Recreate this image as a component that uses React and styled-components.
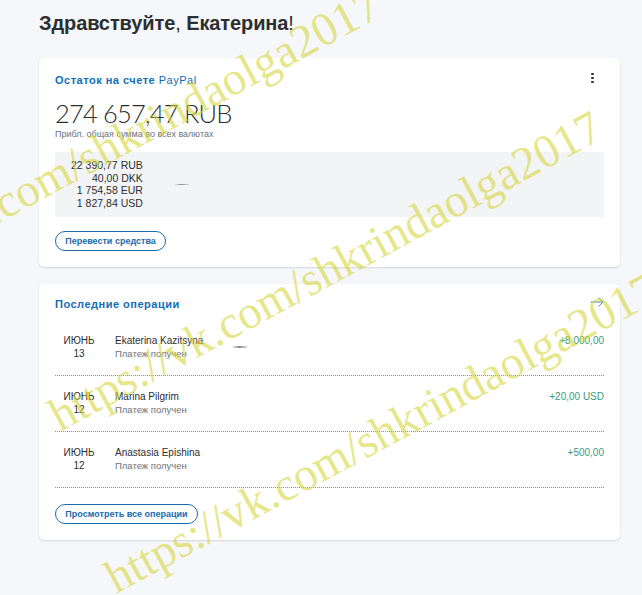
import React from 'react'
import styled, { createGlobalStyle } from 'styled-components'

const GlobalStyle = createGlobalStyle`
  body {
    margin: 0;
    background: #f5f7fa;
    font-family: "Liberation Sans", Arial, sans-serif;
    color: #2c2e2f;
  }
  * { box-sizing: border-box; }
`;

const balances = ['22 390,77 RUB', '40,00 DKK', '1 754,58 EUR', '1 827,84 USD'];

const operations = [
    { month: 'ИЮНЬ', day: '13', name: 'Ekaterina Kazitsyna', amount: '+8 000,00', loading: true },
    { month: 'ИЮНЬ', day: '12', name: 'Marina Pilgrim', amount: '+20,00 USD' },
    { month: 'ИЮНЬ', day: '12', name: 'Anastasia Epishina', amount: '+500,00' },
];

const marks = [
    { x: -162, y: 310 },
    { x: 60, y: 432 },
    { x: 116, y: 594 },
];

const App = () => {
    return (
        <Page>
            <GlobalStyle />
            <Title>Здравствуйте<Light>, </Light>Екатерина<Light>!</Light></Title>

            <Card>
                <CardHead>
                    <CardTitle>Остаток на счете <Light>PayPal</Light></CardTitle>
                    <Kebab aria-label="menu"><i /><i /><i /></Kebab>
                </CardHead>
                <Total>274 657,47 RUB</Total>
                <Caption>Прибл. общая сумма во всех валютах</Caption>
                <BalanceBox>
                    <BalanceList>
                        {balances.map(b => <span key={b}>{b}</span>)}
                    </BalanceList>
                    <Dash />
                </BalanceBox>
                <Pill style={{ width: 111 }}>Перевести средства</Pill>
            </Card>

            <Card $gap>
                <CardHead>
                    <CardTitle>Последние операции</CardTitle>
                    <Arrow width="14" height="10" viewBox="0 0 14 10" fill="none" stroke="#4a86bd" strokeWidth="1">
                        <path d="M0.5 5H13M8.5 0.6L13 5L8.5 9.4" />
                    </Arrow>
                </CardHead>
                <Operations>
                    {operations.map((op, i) => (
                        <Row key={i}>
                            <DateCol>
                                <span>{op.month}</span>
                                <span>{op.day}</span>
                            </DateCol>
                            <Info>
                                <span>{op.name}</span>
                                <Status>Платеж получен</Status>
                            </Info>
                            {op.loading && <Dash />}
                            <Amount>{op.amount}</Amount>
                        </Row>
                    ))}
                </Operations>
                <Pill $wide style={{ width: 143 }}>Просмотреть все операции</Pill>
            </Card>

            <Watermark>
                {marks.map((m, i) => (
                    <Mark key={i} $x={m.x} $y={m.y}>https://vk.com/shkrindaolga2017</Mark>
                ))}
            </Watermark>
        </Page>
    )
}

const Page = styled.div`
position: relative;
min-height: 595px;
overflow: hidden;
padding: 10px 22px 40px 39px;
`;

const Title = styled.h1`
margin: 0 0 22px;
font-size: 20px;
letter-spacing: -0.1px;
line-height: 26px;
font-weight: 700;
color: #2c2e2f;
`;

const Light = styled.span`
font-weight: 400;
`;

const Card = styled.section`
width: 581px;
background: #fff;
border-radius: 5px;
box-shadow: 0 1px 2px rgba(0, 0, 0, 0.14), 0 0 1px rgba(0, 0, 0, 0.06);
padding: ${p => (p.$gap ? '12px 16px 16px' : '14px 16px 16px')};
margin-top: ${p => (p.$gap ? '17px' : '0')};
`;

const CardHead = styled.div`
display: flex;
align-items: center;
justify-content: space-between;
height: 16px;
`;

const CardTitle = styled.h2`
margin: 0;
font-size: 11px;
letter-spacing: 0.5px;
line-height: 16px;
font-weight: 700;
color: #0f6eb5;
`;

const Arrow = styled.svg`
margin-top: -3px;
`;

const Kebab = styled.button`
border: 0;
background: none;
padding: 0 10px 4px;
display: flex;
flex-direction: column;
gap: 1.5px;
i {
    display: block;
    width: 2.6px;
    height: 2.6px;
    border-radius: 50%;
    background: #2c2e2f;
}
`;

const Total = styled.div`
margin-top: 11px;
font-family: Lato, "Open Sans", sans-serif;
font-weight: 300;
font-size: 25.5px;
letter-spacing: -0.8px;
line-height: 28px;
color: #2c2e2f;
`;

const Caption = styled.div`
margin-top: 1px;
font-size: 9px;
line-height: 12px;
color: #6c7378;
`;

const BalanceBox = styled.div`
margin-top: 12px;
background: #f3f4f5;
padding: 7px 16px;
display: flex;
align-items: center;
gap: 32px;
`;

const BalanceList = styled.div`
display: flex;
flex-direction: column;
align-items: flex-end;
font-size: 10.5px;
line-height: 12.7px;
color: #2c2e2f;
`;

const Dash = styled.span`
width: 14px;
height: 1.5px;
background: linear-gradient(to right, #e2e2e2, #8d8d8d 45%, #d9d9d9);
`;

const Pill = styled.button`
display: block;
margin-top: ${p => (p.$wide ? '16px' : '14px')};
height: 20px;
padding: 0;
border: 1px solid #1a6bac;
border-radius: 10px;
background: #fff;
font-family: "Liberation Sans", Arial, sans-serif;
font-size: 9px;
font-weight: 700;
color: #1a6bac;
`;

const Operations = styled.div`
margin-top: 8px;
`;

const Row = styled.div`
display: flex;
align-items: flex-start;
padding: 14px 0 15px;
border-bottom: 1px dotted #8c8c8c;
font-size: 10px;
line-height: 13px;

& > span { align-self: center; margin-left: 30px; }
`;

const DateCol = styled.div`
width: 48px;
display: flex;
flex-direction: column;
align-items: center;
color: #2c2e2f;
`;

const Info = styled.div`
margin-left: 12px;
display: flex;
flex-direction: column;
color: #2c2e2f;
`;

const Status = styled.span`
font-size: 9.5px;
color: #6c7378;
`;

const Amount = styled.div`
margin-left: auto;
color: #3d9a7a;
`;

const Watermark = styled.div`
position: absolute;
inset: 0;
pointer-events: none;
`;

const Mark = styled.span`
position: absolute;
left: ${p => p.$x}px;
top: ${p => p.$y - 39}px;
transform-origin: 0 39px;
transform: rotate(-28.4deg);
white-space: nowrap;
font-family: "Liberation Serif", "Times New Roman", serif;
font-size: 47px;
line-height: 47px;
color: rgba(214, 214, 60, 0.6);
`;

export default App
